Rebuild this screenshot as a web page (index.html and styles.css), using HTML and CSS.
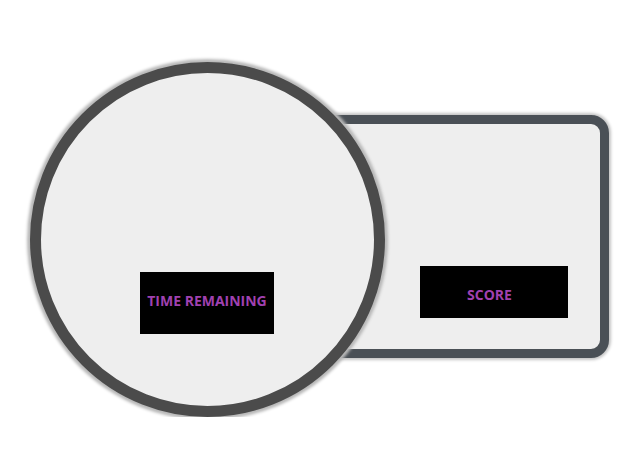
FILE: index.html
```html
<!DOCTYPE html>
<html lang="en">
<head>
<meta charset="UTF-8" />
<meta name="viewport" content="width=device-width, initial-scale=1" />
<title>Timer and Score</title>
<link rel="stylesheet" href="styles.css">
</head>
<body>

<div class="board">
  <div class="timer">
    <div class="label label-time">TIME REMAINING</div>
  </div>
  <div class="panel">
    <div class="label label-score">SCORE</div>
  </div>
</div>

</body>
</html>
```

FILE: styles.css
```css
body {
  margin: 0;
  background-color: #fff;
  font-family: "Open Sans", Arial, sans-serif;
}
.board {
  display: flex;
  align-items: flex-start;
  padding: 62px 0 0 30px;
}
.timer {
  position: relative;
  z-index: 1;
  flex: none;
  box-sizing: border-box;
  width: 355px;
  height: 355px;
  padding: 199px 0 0 99px;
  border: 11px solid #4b4b4b;
  border-radius: 50%;
  background-color: #eee;
  box-shadow: 0 0 3px 3px #b8b8b8;
}
.panel {
  flex: none;
  box-sizing: border-box;
  width: 309px;
  height: 243px;
  margin: 53px 0 0 -85px;
  padding: 142px 0 0 111px;
  border: 9px solid #4a5056;
  border-radius: 18px;
  background-color: #eee;
  box-shadow: 0 0 3px 2px #c4c4c4;
}
.label {
  display: flex;
  align-items: center;
  justify-content: center;
  box-sizing: border-box;
  background-color: #000;
  color: #a041b0;
  font-size: 14px;
  font-weight: bold;
}
.label-time {
  width: 134px;
  height: 62px;
  padding-bottom: 5px;
}
.label-score {
  width: 148px;
  height: 52px;
  padding: 4px 9px 0 0;
}
```
